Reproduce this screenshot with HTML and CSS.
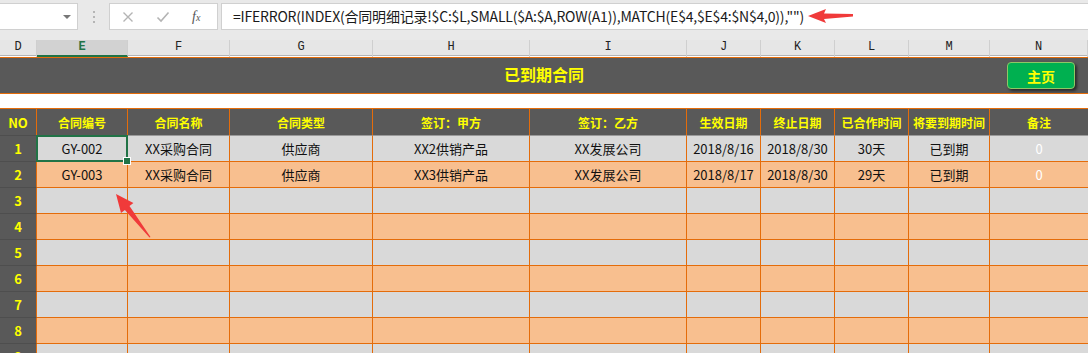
FILE: index.html
```html
<!DOCTYPE html>
<html>
<head>
<meta charset="utf-8">
<link rel="stylesheet" href="styles.css">
</head>
<body>
<div class="app">
  <div class="toolbar">
    <div class="namebox"><span class="caret"></span></div>
    <div class="grip"><i></i><i></i><i></i></div>
    <div class="fxbox">
      <svg class="ico" width="12" height="12" viewBox="0 0 12 12"><path d="M1.5 1.5 L10.5 10.5 M10.5 1.5 L1.5 10.5" stroke="#b4b4b4" stroke-width="1.4" fill="none"/></svg>
      <svg class="ico" width="14" height="12" viewBox="0 0 14 12"><path d="M1.5 6.5 L5 10 L12.5 1.5" stroke="#b4b4b4" stroke-width="1.6" fill="none"/></svg>
      <span class="fx">f<span class="x">x</span></span>
    </div>
    <div class="formula">=IFERROR(INDEX(合同明细记录!$C:$L,SMALL($A:$A,ROW(A1)),MATCH(E$4,$E$4:$N$4,0)),"")</div>
  </div>

  <div class="grid colheads">
    <div>D</div><div class="sel">E</div><div>F</div><div>G</div><div>H</div><div>I</div><div>J</div><div>K</div><div>L</div><div>M</div><div>N</div>
  </div>

  <div class="titlebar">
    <div></div>
    <h1 class="title">已到期合同</h1>
    <div class="btnwrap"><button class="homebtn">主页</button></div>
  </div>
  <div class="blank"></div>

  <div class="sheet">
    <div class="grid row head">
      <div class="no">NO</div><div>合同编号</div><div>合同名称</div><div>合同类型</div><div>签订：甲方</div><div>签订：乙方</div><div>生效日期</div><div>终止日期</div><div>已合作时间</div><div>将要到期时间</div><div>备注</div>
    </div>
    <div class="grid row gray">
      <div class="no">1</div><div class="active">GY-002</div><div>XX采购合同</div><div>供应商</div><div>XX2供销产品</div><div>XX发展公司</div><div>2018/8/16</div><div>2018/8/30</div><div>30天</div><div>已到期</div><div class="zero">0</div>
    </div>
    <div class="grid row peach">
      <div class="no">2</div><div>GY-003</div><div>XX采购合同</div><div>供应商</div><div>XX3供销产品</div><div>XX发展公司</div><div>2018/8/17</div><div>2018/8/30</div><div>29天</div><div>已到期</div><div class="zero">0</div>
    </div>
    <div class="grid row gray"><div class="no">3</div><div></div><div></div><div></div><div></div><div></div><div></div><div></div><div></div><div></div><div></div></div>
    <div class="grid row peach"><div class="no">4</div><div></div><div></div><div></div><div></div><div></div><div></div><div></div><div></div><div></div><div></div></div>
    <div class="grid row gray"><div class="no">5</div><div></div><div></div><div></div><div></div><div></div><div></div><div></div><div></div><div></div><div></div></div>
    <div class="grid row peach"><div class="no">6</div><div></div><div></div><div></div><div></div><div></div><div></div><div></div><div></div><div></div><div></div></div>
    <div class="grid row gray"><div class="no">7</div><div></div><div></div><div></div><div></div><div></div><div></div><div></div><div></div><div></div><div></div></div>
    <div class="grid row peach"><div class="no">8</div><div></div><div></div><div></div><div></div><div></div><div></div><div></div><div></div><div></div><div></div></div>
    <div class="grid row gray"><div class="no">9</div><div></div><div></div><div></div><div></div><div></div><div></div><div></div><div></div><div></div><div></div></div>
  </div>

  <svg class="arrows" width="1088" height="353" viewBox="0 0 1088 353">
    <polygon points="808,16 826,9 824,13.5 853,14 853,16.5 824,19 826,23" fill="#f03a3a"/>
    <polygon points="116,194 133.4,203 129.5,206.1 150.5,237 149.5,237.5 124.9,209.9 121,213" fill="#f03a3a"/>
  </svg>
</div>
</body>
</html>
```

FILE: styles.css
```css
* { box-sizing: border-box; margin: 0; padding: 0; }
html, body { background: #ffffff; }
body { font-family: "Noto Sans CJK SC", "Noto Sans", sans-serif; }

.app {
  position: relative;
  width: 1088px;
  height: 353px;
  overflow: hidden;
}

/* ---------- formula toolbar ---------- */
.toolbar {
  height: 40px;
  background: #e9e9e9;
  display: flex;
  align-items: flex-start;
  padding-top: 3px;
}
.namebox {
  width: 79px;
  height: 27px;
  margin-left: -1px;
  background: #fff;
  border: 1px solid #d0d0d0;
  display: flex;
  align-items: center;
  justify-content: flex-end;
  padding-right: 6px;
}
.caret {
  width: 0; height: 0;
  border-left: 4px solid transparent;
  border-right: 4px solid transparent;
  border-top: 4px solid #777;
}
.grip {
  width: 31px;
  height: 27px;
  display: flex;
  flex-direction: column;
  align-items: center;
  justify-content: center;
  gap: 3px;
}
.grip i {
  display: block;
  width: 2px; height: 2px;
  background: #b5b5b5;
}
.fxbox {
  width: 109px;
  height: 27px;
  background: #fff;
  border: 1px solid #d0d0d0;
  display: flex;
  align-items: center;
  padding-left: 12px;
  gap: 22px;
}
.fx {
  font-family: "Liberation Serif", serif;
  font-style: italic;
  font-size: 14px;
  color: #555;
}
.fx .x { font-size: 10px; }
.formula {
  flex: 1;
  height: 27px;
  margin-left: 3px;
  background: #fff;
  border: 1px solid #d0d0d0;
  border-right: none;
  padding-left: 11px;
  font-size: 14px;
  letter-spacing: -0.2px;
  line-height: 25px;
  color: #1a1a1a;
  white-space: nowrap;
}

/* ---------- grid columns ---------- */
.grid {
  display: grid;
  grid-template-columns: 37px 91px 102px 143px 157px 157px 74px 74px 74px 81px 98px;
}

.colheads {
  height: 16px;
  background: #e6e6e6;
  border-bottom: 1px solid #b4b4b4;
}
.colheads div {
  border-right: 1px solid #cfcfcf;
  text-align: center;
  font-family: "Liberation Mono", monospace;
  font-size: 12px;
  line-height: 15px;
  color: #222;
}
.colheads .sel {
  background: #d2d2d2;
  color: #217346;
  border-bottom: 2px solid #217346;
  font-weight: bold;
}

/* ---------- title bar ---------- */
.titlebar {
  margin-top: 1px;
  height: 37px;
  background: #595959;
  border-top: 1px solid #e46c0a;
  border-bottom: 1px solid #e46c0a;
  display: grid;
  grid-template-columns: 1fr auto 1fr;
  align-items: start;
}
.title {
  font-size: 16px;
  font-weight: bold;
  color: #ffff00;
  line-height: 33px;
}
.btnwrap {
  display: flex;
  justify-content: flex-end;
  padding-right: 13px;
  padding-top: 4px;
}
.homebtn {
  width: 68px;
  height: 27px;
  background: #00b050;
  border: 1px solid #8fc765;
  border-radius: 4px;
  box-shadow: 2px 2px 3px rgba(0,0,0,0.55);
  color: #ffff00;
  font-family: "Noto Sans CJK SC", sans-serif;
  font-weight: bold;
  font-size: 14px;
}

.blank {
  height: 14px;
  background: #fff;
}

/* ---------- sheet ---------- */
.sheet {
  border-top: 1px solid #e46c0a;
}
.row div {
  border-right: 1px solid #e46c0a;
  border-bottom: 1px solid #e46c0a;
  display: flex;
  align-items: center;
  justify-content: center;
  font-size: 13px;
  color: #111;
  white-space: nowrap;
}
.row div:last-child { border-right: none; }
.row { height: 26px; }
.row.head { height: 27px; }
.row.head div {
  background: #595959;
  color: #ffff00;
  font-weight: bold;
  font-size: 12px;
  border-bottom-color: #9a9a9a;
}
.row .no {
  background: #595959;
  color: #ffff00;
  font-weight: bold;
  font-size: 13px;
  border-bottom-color: #4e4e4e;
}
.row.head .no { border-bottom-color: #4e4e4e; font-size: 13px; }
.row.gray div { background: #d9d9d9; }
.row.peach div { background: #f8bf8f; }
.row.gray .no, .row.peach .no { background: #595959; }
.row .zero { color: #ffffff; }

.row .active {
  position: relative;
  box-shadow: inset 0 0 0 1px #fff;
}
.row .active::before {
  content: "";
  position: absolute;
  left: -1px; top: -1px; right: -1px; bottom: -1px;
  border: 2px solid #217346;
}
.row .active::after {
  content: "";
  position: absolute;
  right: -4px; bottom: -4px;
  width: 6px; height: 6px;
  background: #217346;
  border: 1px solid #fff;
  z-index: 2;
}

.arrows {
  position: absolute;
  left: 0; top: 0;
  pointer-events: none;
}
```
